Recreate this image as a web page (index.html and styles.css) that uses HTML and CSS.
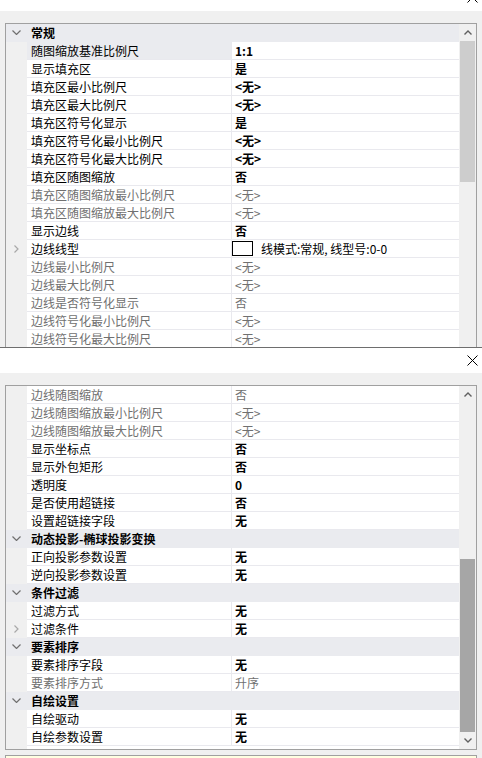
FILE: index.html
```html
<!DOCTYPE html>
<html lang="zh-CN">

<head>
  <meta charset="UTF-8" />
  <meta name="viewport" content="width=device-width, initial-scale=1" />
  <title>属性</title>
  <link rel="stylesheet" href="styles.css">
</head>

<body>
  <div class="titlebar">
    <svg class="close" width="11" height="11" viewBox="0 0 11 11"><path d="M0.5 0.5 L10.5 10.5 M10.5 0.5 L0.5 10.5" stroke="#000" stroke-width="1" fill="none" /></svg>
  </div>

  <div class="pane">
    <div class="grid grid-top">
      <div class="rows" id="rows-top"></div>
      <div class="scrollbar">
        <div class="sb-btn">
          <svg width="8" height="5" viewBox="0 0 8 5"><polyline points="0.5,4.5 4,1 7.5,4.5" stroke="#606060" stroke-width="1.4" fill="none" /></svg>
        </div>
        <div class="thumb thumb-top"></div>
      </div>
    </div>
  </div>

  <div class="divider"></div>

  <div class="titlebar titlebar-mid">
    <svg class="close" width="11" height="11" viewBox="0 0 11 11"><path d="M0.5 0.5 L10.5 10.5 M10.5 0.5 L0.5 10.5" stroke="#000" stroke-width="1" fill="none" /></svg>
  </div>

  <div class="pane">
    <div class="grid grid-bottom">
      <div class="rows" id="rows-bottom"></div>
      <div class="scrollbar">
        <div class="sb-btn">
          <svg width="8" height="5" viewBox="0 0 8 5"><polyline points="0.5,4.5 4,1 7.5,4.5" stroke="#606060" stroke-width="1.4" fill="none" /></svg>
        </div>
        <div class="thumb thumb-bottom"></div>
        <div class="sb-btn">
          <svg width="8" height="5" viewBox="0 0 8 5"><polyline points="0.5,0.5 4,4 7.5,0.5" stroke="#606060" stroke-width="1.4" fill="none" /></svg>
        </div>
      </div>
    </div>
    <div class="desc"></div>
  </div>

  <script>
    const topRows = [
      { cat: "常规" },
      { name: "随图缩放基准比例尺", value: "1:1", bold: true, selected: true },
      { name: "显示填充区", value: "是", bold: true },
      { name: "填充区最小比例尺", value: "<无>", bold: true },
      { name: "填充区最大比例尺", value: "<无>", bold: true },
      { name: "填充区符号化显示", value: "是", bold: true },
      { name: "填充区符号化最小比例尺", value: "<无>", bold: true },
      { name: "填充区符号化最大比例尺", value: "<无>", bold: true },
      { name: "填充区随图缩放", value: "否", bold: true },
      { name: "填充区随图缩放最小比例尺", value: "<无>", off: true },
      { name: "填充区随图缩放最大比例尺", value: "<无>", off: true },
      { name: "显示边线", value: "否", bold: true },
      { name: "边线线型", value: "线模式:常规, 线型号:0-0", swatch: true, expand: true },
      { name: "边线最小比例尺", value: "<无>", off: true },
      { name: "边线最大比例尺", value: "<无>", off: true },
      { name: "边线是否符号化显示", value: "否", off: true },
      { name: "边线符号化最小比例尺", value: "<无>", off: true },
      { name: "边线符号化最大比例尺", value: "<无>", off: true },
    ];

    const bottomRows = [
      { name: "边线随图缩放", value: "否", off: true },
      { name: "边线随图缩放最小比例尺", value: "<无>", off: true },
      { name: "边线随图缩放最大比例尺", value: "<无>", off: true },
      { name: "显示坐标点", value: "否", bold: true },
      { name: "显示外包矩形", value: "否", bold: true },
      { name: "透明度", value: "0", bold: true },
      { name: "是否使用超链接", value: "否", bold: true },
      { name: "设置超链接字段", value: "无", bold: true },
      { cat: "动态投影-椭球投影变换" },
      { name: "正向投影参数设置", value: "无", bold: true },
      { name: "逆向投影参数设置", value: "无", bold: true },
      { cat: "条件过滤" },
      { name: "过滤方式", value: "无", bold: true },
      { name: "过滤条件", value: "无", bold: true, expand: true },
      { cat: "要素排序" },
      { name: "要素排序字段", value: "无", bold: true },
      { name: "要素排序方式", value: "升序", off: true },
      { cat: "自绘设置" },
      { name: "自绘驱动", value: "无", bold: true },
      { name: "自绘参数设置", value: "无", bold: true },
    ];

    const chevronDown = '<svg width="9" height="5" viewBox="0 0 9 5"><polyline points="0.5,0.5 4.5,4.5 8.5,0.5" stroke="#707070" stroke-width="1.2" fill="none" /></svg>';
    const chevronRight = '<svg width="5" height="8" viewBox="0 0 5 8"><polyline points="0.5,0.5 4,4 0.5,7.5" stroke="#a8a8a8" stroke-width="1.2" fill="none" /></svg>';

    function escapeText(text) {
      return text.replace(/</g, "&lt;").replace(/>/g, "&gt;");
    }

    function renderRows(container, rows) {
      rows.forEach(row => {
        const div = document.createElement("div");
        if (row.cat) {
          div.className = "row row-cat";
          div.innerHTML = `<div class="gutter">${chevronDown}</div><div class="cat-name">${row.cat}</div>`;
        } else {
          div.className = "row";
          let nameClass = "name";
          if (row.off) nameClass += " off";
          if (row.selected) nameClass += " selected";
          let valueClass = "value";
          if (row.bold) valueClass += " bold";
          if (row.off) valueClass += " off";
          const swatch = row.swatch ? '<span class="swatch"></span>' : "";
          div.innerHTML = `
            <div class="gutter">${row.expand ? chevronRight : ""}</div>
            <div class="${nameClass}">${row.name}</div>
            <div class="${valueClass}">${swatch}${escapeText(row.value)}</div>
          `;
        }
        container.appendChild(div);
      });
    }

    renderRows(document.getElementById("rows-top"), topRows);
    renderRows(document.getElementById("rows-bottom"), bottomRows);
  </script>
</body>

</html>
```

FILE: styles.css
```css
body {
  margin: 0;
  width: 482px;
  height: 758px;
  overflow: hidden;
  background-color: #f0f0f0;
  font-family: "Noto Sans CJK SC", "Liberation Sans", sans-serif;
  font-size: 12px;
  color: #000;
}

.titlebar {
  height: 11px;
  background-color: #fff;
  overflow: hidden;
  display: flex;
  justify-content: flex-end;
}

.titlebar .close {
  margin-top: -8px;
  margin-right: 4px;
}

.titlebar-mid {
  height: 25px;
  align-items: center;
}

.titlebar-mid .close {
  margin-top: 0;
}

.divider {
  height: 1px;
  background-color: #6e6e6e;
}

.pane {
  padding: 12px 5px 0;
}

.grid {
  box-sizing: border-box;
  display: flex;
  border: 1px solid #a0a0a0;
  background-color: #fff;
  overflow: hidden;
}

.grid-top {
  height: 324px;
  border-bottom: none;
}

.grid-bottom {
  height: 365px;
}

.rows {
  flex: 1;
  background: linear-gradient(to right, #f0f0f0 21px, #fff 21px);
}

.row {
  display: flex;
  height: 18px;
}

.gutter {
  width: 21px;
  flex-shrink: 0;
  background-color: #f0f0f0;
  display: flex;
  align-items: center;
  justify-content: center;
}

.row-cat {
  background-color: #eaebef;
}

.row-cat .gutter {
  background-color: #eaebef;
  padding-bottom: 1px;
  box-sizing: border-box;
}

.cat-name {
  padding-left: 4px;
  line-height: 18px;
  font-weight: bold;
}

.name,
.value {
  box-sizing: border-box;
  height: 18px;
  line-height: 17px;
  border-bottom: 1px solid #e9e9ee;
  white-space: nowrap;
  overflow: hidden;
}

.name {
  width: 205px;
  padding-left: 4px;
  border-right: 1px solid #e9e9ee;
}

.name.selected {
  background-color: #eaebef;
}

.value {
  flex: 1;
  padding-left: 3px;
  display: flex;
  align-items: center;
}

.value.bold {
  font-weight: bold;
}

.off {
  color: #707070;
}

.swatch {
  width: 19px;
  height: 13px;
  border: 1px solid #000;
  background-color: #fff;
  margin-left: -3px;
  margin-right: 8px;
}

.scrollbar {
  width: 17px;
  flex-shrink: 0;
  background-color: #f0f0f0;
  display: flex;
  flex-direction: column;
}

.sb-btn {
  height: 17px;
  flex-shrink: 0;
  display: flex;
  align-items: center;
  justify-content: center;
}

.thumb {
  width: 15px;
  margin-left: 1px;
  flex-shrink: 0;
}

.thumb-top {
  height: 141px;
  background-color: #cdcdcd;
}

.thumb-bottom {
  height: 173px;
  margin-top: auto;
  background-color: #a6a6a6;
}

.desc {
  height: 20px;
  margin-top: 5px;
  border: 1px solid #a0a0a0;
  background-color: #ffffe1;
}
```
